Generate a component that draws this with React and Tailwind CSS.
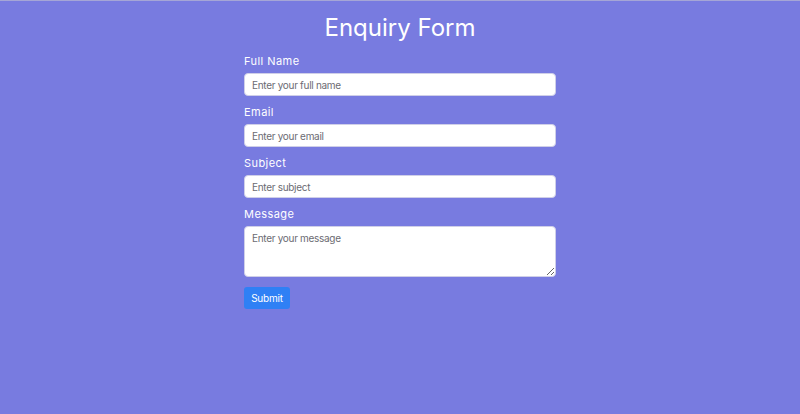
export default function App() {
  const fields = [
    { label: "Full Name", placeholder: "Enter your full name", type: "text" },
    { label: "Email", placeholder: "Enter your email", type: "email" },
    { label: "Subject", placeholder: "Enter subject", type: "text" },
  ];

  return (
    <div className="min-h-[414px] w-full bg-[#787be0] border-t border-[#a5a6d6] flex flex-col items-center font-['Inter','Noto_Sans',sans-serif]">
      <h1 className="mt-[12px] text-[24px] leading-[30px] text-white font-normal">
        Enquiry Form
      </h1>
      <form className="w-[312px] mt-[11px] flex flex-col" onSubmit={(e) => e.preventDefault()}>
        {fields.map((f) => (
          <div key={f.label} className="flex flex-col mb-[9px]">
            <label className="text-[11px] leading-[14px] tracking-[0.04em] text-white mb-[5px]">
              {f.label}
            </label>
            <input
              type={f.type}
              placeholder={f.placeholder}
              className="h-[23px] w-full rounded-[4px] border border-[#cfcfe8] bg-white px-[7px] text-[10px] tracking-[-0.03em] text-[#333] placeholder:text-[#6b6b72] outline-none"
            />
          </div>
        ))}
        <div className="flex flex-col">
          <label className="text-[11px] leading-[14px] tracking-[0.04em] text-white mb-[5px]">
            Message
          </label>
          <textarea
            placeholder="Enter your message"
            className="block h-[51px] w-full rounded-[4px] border border-[#cfcfe8] bg-white px-[7px] py-[4px] text-[10px] leading-[14px] tracking-[-0.03em] text-[#333] placeholder:text-[#6b6b72] outline-none"
          />
        </div>
        <button
          type="submit"
          className="block mt-[10px] h-[22px] w-[46px] rounded-[3px] bg-[#2f80f5] text-white text-[10px] tracking-[-0.02em]"
        >
          Submit
        </button>
      </form>
    </div>
  );
}
